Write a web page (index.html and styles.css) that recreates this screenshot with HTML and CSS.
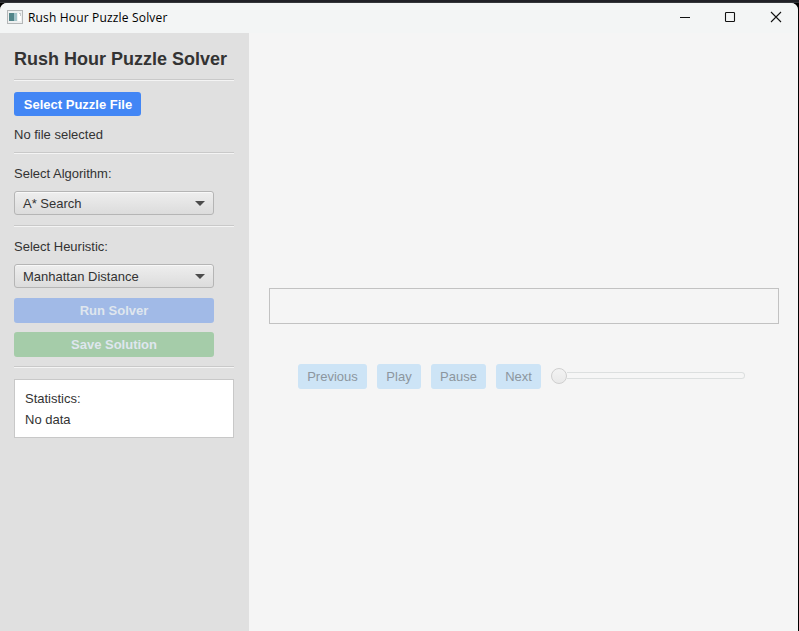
FILE: index.html
```html
<!DOCTYPE html>
<html lang="en">
<head>
<meta charset="utf-8">
<title>Rush Hour Puzzle Solver</title>
<link rel="stylesheet" href="styles.css">
</head>
<body>
<div class="window">
  <header class="titlebar">
    <svg class="app-icon" width="16" height="14" viewBox="0 0 16 14">
      <rect x=".5" y=".5" width="15" height="13" fill="#eef0f0" stroke="#b4b7b8"/>
      <rect x="2" y="3" width="5" height="8" fill="#528589"/>
      <rect x="7" y="3" width="3" height="8" fill="#a3c3c9"/>
      <rect x="11" y="3" width="3" height="8" fill="#fff"/>
      <path d="M12 3.500h2M13.500 3v3" stroke="#c5cbcd" fill="none"/>
    </svg>
    <span class="caption">Rush Hour Puzzle Solver</span>
    <svg class="controls" width="102" height="12" viewBox="0 0 102 12" fill="none" stroke="#111" stroke-width="1.100">
      <path d="M0 6.500h10"/>
      <rect x="45.500" y="1.500" width="9" height="9" rx=".8"/>
      <path d="M91 1l10 10M101 1L91 11"/>
    </svg>
  </header>
  <main class="content">
    <aside class="sidebar">
      <h1>Rush Hour Puzzle Solver</h1>
      <div class="separator"></div>
      <button class="btn select-file">Select Puzzle File</button>
      <div class="label">No file selected</div>
      <div class="separator"></div>
      <div class="label">Select Algorithm:</div>
      <div class="combo"><span>A* Search</span><i class="arrow"></i></div>
      <div class="separator"></div>
      <div class="label">Select Heuristic:</div>
      <div class="combo"><span>Manhattan Distance</span><i class="arrow"></i></div>
      <button class="btn run">Run Solver</button>
      <button class="btn save">Save Solution</button>
      <div class="separator last"></div>
      <section class="stats">
        <div>Statistics:</div>
        <div>No data</div>
      </section>
    </aside>
    <section class="viewer">
      <div class="board"></div>
      <div class="playback">
        <button class="step previous">Previous</button>
        <button class="step play">Play</button>
        <button class="step pause">Pause</button>
        <button class="step next">Next</button>
        <div class="slider"><div class="thumb"></div><div class="track"></div></div>
      </div>
    </section>
  </main>
</div>
</body>
</html>
```
FILE: styles.css
```css
* { box-sizing: border-box; }
body {
  margin: 0;
  height: 631px;
  overflow: hidden;
  padding: 3px 1px 0 0;
  background: linear-gradient(#202126 0 2px, #34363a 2px 3px, #000 3px);
  font: 13px/16px "Liberation Sans", Arial, sans-serif;
  color: #333;
}
.window {
  height: 628px;
  display: flex;
  flex-direction: column;
  background: #f4f4f4;
  border-radius: 7px 7px 0 0;
  overflow: hidden;
}
.titlebar {
  height: 30px;
  flex: none;
  display: flex;
  align-items: center;
  padding: 0 16px 2px 7px;
  background: #f3f5f5;
}
.caption {
  margin-left: 5px;
  padding-top: 1px;
  font: 12px/16px "Open Sans", "Noto Sans", sans-serif;
  letter-spacing: .17px;
  color: #000;
}
.controls { margin-left: auto; }
.content { flex: 1; display: flex; }
.sidebar {
  width: 249px;
  padding: 15px 15px 0 14px;
  background: #e0e0e0;
  display: flex;
  flex-direction: column;
  align-items: flex-start;
  gap: 10px;
}
h1 { margin: 0; font-size: 18px; line-height: 23px; height: 21px; white-space: nowrap; }
.separator {
  width: 100%;
  height: 3px;
  flex: none;
  background: linear-gradient(#c9c9c9 0 1px, #f4f4f4 1px 2px, transparent 2px);
}
.label { height: 16px; line-height: 18px; }
button {
  margin: 0;
  padding: 0;
  border: 0;
  border-radius: 3px;
  font: 13px/16px "Liberation Sans", Arial, sans-serif;
}
.btn { width: 200px; height: 25px; font-weight: bold; color: #dfe6ee; }
.select-file { width: 127px; height: 24px; padding: 1px 0 0 1px; background: #4286f5; color: #fff; }
.run { background: #a1bae7; }
.save { background: #a5cca9; margin-top: -1px; }
.last { margin-top: -1px; }
.combo {
  width: 200px;
  height: 24px;
  display: flex;
  align-items: center;
  justify-content: space-between;
  padding: 0 8px;
  border: 1px solid #b5b5b5;
  border-radius: 3px;
  background: linear-gradient(#eee, #dcdcdc);
  box-shadow: inset 0 1px #f8f8f8;
}
.combo span { padding-top: 2px; }
.arrow {
  border: 5px solid transparent;
  border-top-color: #4c4c4c;
  border-bottom: 0;
}
.stats {
  width: 220px;
  height: 59px;
  padding: 8px 10px;
  border: 1px solid #c8c8c8;
  background: #fff;
  line-height: 21px;
}
.viewer { flex: 1; padding: 255px 19px 0 20px; background: #f5f5f5; }
.board { height: 36px; border: 1px solid #c2c2c2; }
.playback { display: flex; align-items: center; gap: 10px; margin: 40px 0 0 29px; }
.step { height: 25px; background: #cde4f6; color: #8c969e; }
.previous { width: 69px; }
.play { width: 44px; }
.pause { width: 55px; }
.next { width: 45px; }
.slider { display: flex; align-items: center; width: 194px; margin-bottom: 1px; }
.thumb {
  width: 16px;
  height: 16px;
  flex: none;
  border: 1px solid #cfcfcf;
  border-radius: 50%;
  background: linear-gradient(#f3f3f3, #e9e9e9);
}
.track {
  flex: 1;
  height: 7px;
  margin-top: -1px;
  border: 1px solid #dcdfdf;
  border-left: 0;
  border-radius: 0 4px 4px 0;
  background: #f6f6f6;
}
```
